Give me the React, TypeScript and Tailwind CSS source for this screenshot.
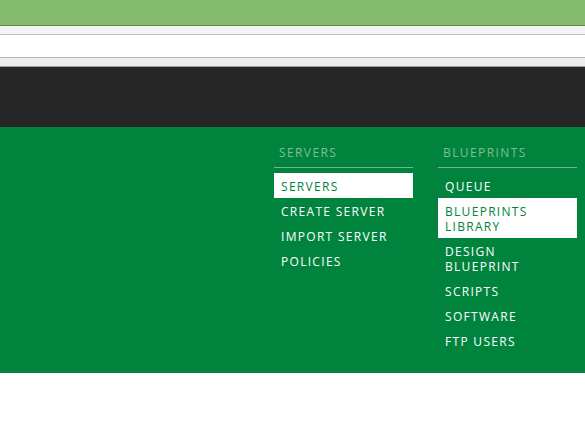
const servers = [
  { label: 'SERVERS', active: true },
  { label: 'CREATE SERVER' },
  { label: 'IMPORT SERVER' },
  { label: 'POLICIES' },
]

const blueprints = [
  { label: 'QUEUE' },
  { label: 'BLUEPRINTS LIBRARY', active: true },
  { label: 'DESIGN BLUEPRINT' },
  { label: 'SCRIPTS' },
  { label: 'SOFTWARE' },
  { label: 'FTP USERS' },
]

type Item = { label: string; active?: boolean }

function MenuColumn({ title, items }: { title: string; items: Item[] }) {
  return (
    <div className="w-[139px]">
      <div className="px-[5px] pt-[1px] pb-[7px] text-[12px] leading-[15px] tracking-[1.4px] text-[#7fbd95] border-b border-[#73b68b]">
        {title}
      </div>
      <ul className="mt-[5px]">
        {items.map((item) => (
          <li
            key={item.label}
            className={`px-[7px] pt-[6px] pb-[4px] text-[12px] leading-[15px] tracking-[1.3px] ${
              item.active ? 'bg-white text-[#00843d]' : 'text-white'
            }`}
          >
            {item.label}
          </li>
        ))}
      </ul>
    </div>
  )
}

export default function App() {
  return (
    <div className="min-h-screen bg-white" style={{ fontFamily: '"Open Sans", "Noto Sans", sans-serif' }}>
      {/* browser chrome */}
      <div className="h-[26px] bg-[#84bb6c] border-b border-[#5e8a52]" />
      <div className="h-[9px] bg-[#f4f4f4] border-b border-[#b8c1cb]" />
      <div className="h-[23px] bg-white border-b border-[#b0b8c2]" />
      <div className="h-[9px] bg-[#eeeeee] border-b border-[#a0a0a0]" />

      {/* header */}
      <div className="h-[60px] bg-[#262626]" />

      {/* mega menu */}
      <div className="bg-[#00843d] h-[246px] flex justify-end gap-[25px] pr-[8px] pt-[17px]">
        <MenuColumn title="SERVERS" items={servers} />
        <MenuColumn title="BLUEPRINTS" items={blueprints} />
      </div>
    </div>
  )
}
